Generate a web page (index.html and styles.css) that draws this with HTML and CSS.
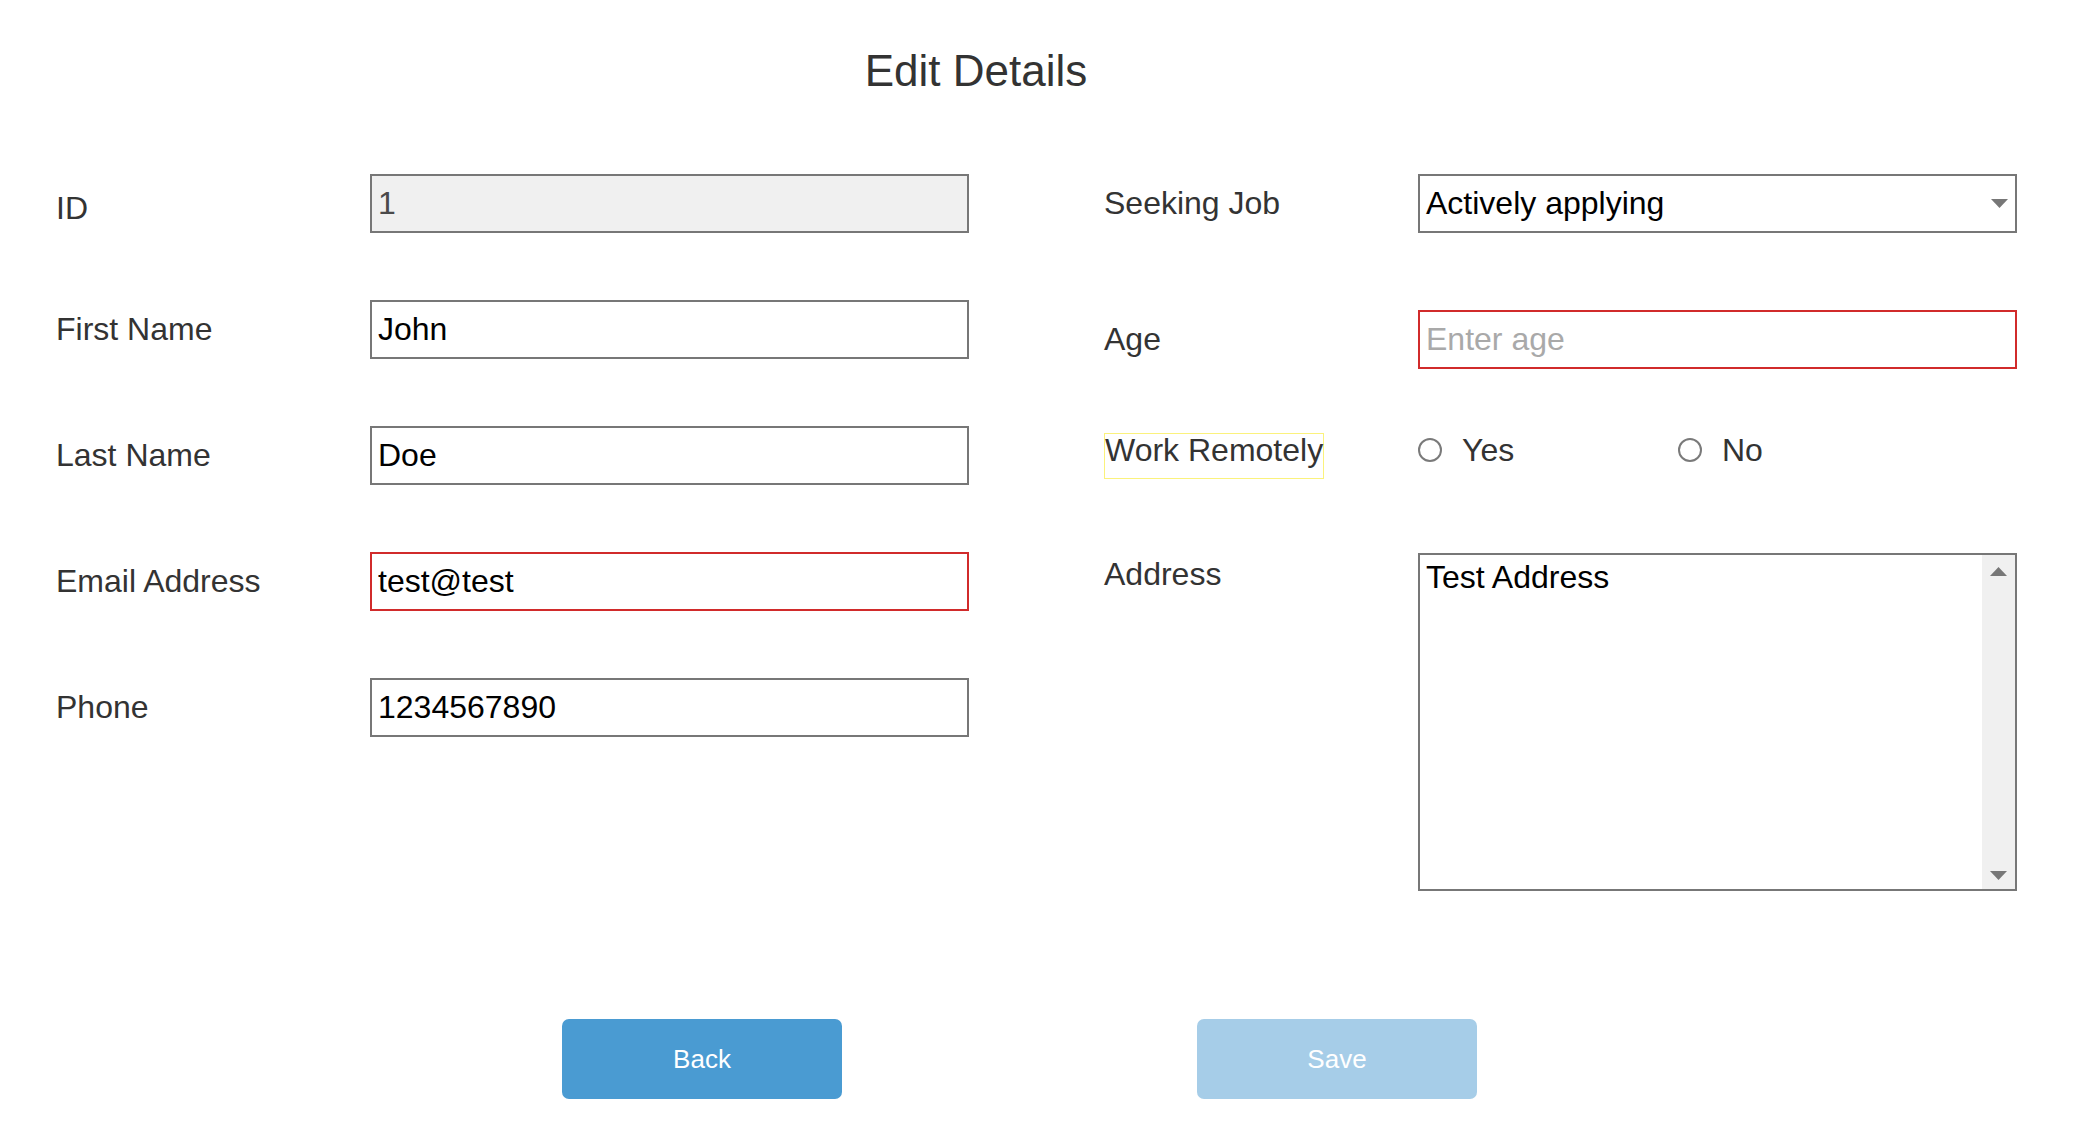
FILE: index.html
```html
<!DOCTYPE html>
<html lang="en">
<head>
<meta charset="utf-8">
<title>Edit Details</title>
<link rel="stylesheet" href="styles.css">
</head>
<body>
<div class="page">
  <h1 class="title">Edit Details</h1>
  <div class="form">
    <div class="col col-left">
      <div class="row">
        <label class="label label-id">ID</label>
        <input class="field field-disabled" type="text" value="1" disabled>
      </div>
      <div class="row">
        <label class="label">First Name</label>
        <input class="field" type="text" value="John">
      </div>
      <div class="row">
        <label class="label">Last Name</label>
        <input class="field" type="text" value="Doe">
      </div>
      <div class="row">
        <label class="label">Email Address</label>
        <input class="field field-error" type="text" value="test@test">
      </div>
      <div class="row">
        <label class="label">Phone</label>
        <input class="field" type="text" value="1234567890">
      </div>
    </div>
    <div class="col col-right">
      <div class="row row-seeking">
        <label class="label">Seeking Job</label>
        <div class="select">
          <span class="select-value">Actively applying</span>
          <svg class="select-arrow" width="17" height="9" viewBox="0 0 17 9"><polygon points="0,0 17,0 8.5,9" fill="#777"/></svg>
        </div>
      </div>
      <div class="row row-age">
        <label class="label">Age</label>
        <input class="field field-error" type="text" placeholder="Enter age">
      </div>
      <div class="row row-remote">
        <div class="label">
          <span class="label-highlight">Work Remotely</span>
        </div>
        <div class="radios">
          <label class="radio-option radio-yes"><span class="radio"></span><span class="radio-text">Yes</span></label>
          <label class="radio-option"><span class="radio"></span><span class="radio-text">No</span></label>
        </div>
      </div>
      <div class="row row-address">
        <label class="label label-address">Address</label>
        <div class="textarea">
          <div class="textarea-content">Test Address</div>
          <div class="scrollbar">
            <svg width="17" height="9" viewBox="0 0 17 9"><polygon points="0,9 17,9 8.5,0" fill="#777"/></svg>
            <svg width="17" height="9" viewBox="0 0 17 9"><polygon points="0,0 17,0 8.5,9" fill="#777"/></svg>
          </div>
        </div>
      </div>
    </div>
  </div>
  <div class="actions">
    <button class="btn btn-primary" type="button">Back</button>
    <button class="btn btn-disabled" type="button">Save</button>
  </div>
</div>
</body>
</html>
```

FILE: styles.css
```css
* {
  box-sizing: border-box;
}

html, body {
  margin: 0;
  padding: 0;
  background: #ffffff;
}

body {
  font-family: "Liberation Sans", Arial, sans-serif;
  color: #333333;
}

.page {
  padding-top: 46px;
}

.title {
  margin: 0;
  width: 1952px;
  text-align: center;
  font-size: 44px;
  font-weight: normal;
  line-height: 50px;
  color: #333333;
}

.form {
  display: flex;
  align-items: flex-start;
  gap: 135px;
  padding-left: 56px;
  margin-top: 78px;
}

.col {
  width: 913px;
  display: flex;
  flex-direction: column;
}

.col-left {
  gap: 67px;
}

.row {
  display: flex;
  align-items: center;
  height: 59px;
}

.label {
  width: 314px;
  flex: none;
  font-size: 32px;
  color: #333333;
}

.label-id {
  padding-top: 9px;
}

.field {
  width: 599px;
  height: 59px;
  border: 2px solid #777777;
  background: #ffffff;
  padding: 0 6px;
  margin: 0;
  font-family: "Liberation Sans", Arial, sans-serif;
  font-size: 32px;
  color: #000000;
  outline: none;
  border-radius: 0;
}

.field::placeholder {
  color: #a9a9a9;
}

.field-disabled {
  background: #f0f0f0;
  color: #4a4a4a;
  -webkit-text-fill-color: #4a4a4a;
  opacity: 1;
}

.field-error {
  border-color: #d12b2b;
}

.select {
  width: 599px;
  height: 59px;
  border: 2px solid #777777;
  display: flex;
  align-items: center;
  padding: 0 7px 0 6px;
  font-size: 32px;
  color: #000000;
}

.select-arrow {
  margin-left: auto;
  flex: none;
}

.row-age {
  margin-top: 77px;
}

.row-remote {
  margin-top: 63px;
  height: 46px;
  align-items: flex-start;
}

.label-highlight {
  display: inline-block;
  height: 46px;
  line-height: 1;
  border: 1.5px solid #fbf27c;
  white-space: nowrap;
}

.radios {
  display: flex;
  align-items: center;
  margin-top: 6px;
}

.radio-option {
  display: flex;
  align-items: center;
  height: 24px;
  font-size: 32px;
  color: #333333;
}

.radio-yes {
  width: 260px;
}

.radio {
  width: 24px;
  height: 24px;
  border: 2px solid #7a7a7a;
  border-radius: 50%;
  background: #ffffff;
  flex: none;
  margin-right: 20px;
}

.row-address {
  margin-top: 75px;
  height: 338px;
  align-items: flex-start;
}

.label-address {
  padding-top: 3px;
}

.textarea {
  width: 599px;
  height: 338px;
  border: 2px solid #777777;
  display: flex;
}

.textarea-content {
  flex: 1;
  padding: 4px 6px;
  font-size: 32px;
  color: #000000;
}

.scrollbar {
  width: 33px;
  flex: none;
  background: #f0f0f0;
  display: flex;
  flex-direction: column;
  align-items: center;
  justify-content: space-between;
  padding: 12px 0 9px;
}

.actions {
  display: flex;
  gap: 355px;
  padding-left: 562px;
  margin-top: 128px;
}

.btn {
  width: 280px;
  height: 80px;
  border: none;
  border-radius: 7px;
  font-family: "Liberation Sans", Arial, sans-serif;
  font-size: 26px;
  color: #ffffff;
  padding: 0;
}

.btn-primary {
  background: #4a9bd2;
}

.btn-disabled {
  background: #a6cde8;
}
```
